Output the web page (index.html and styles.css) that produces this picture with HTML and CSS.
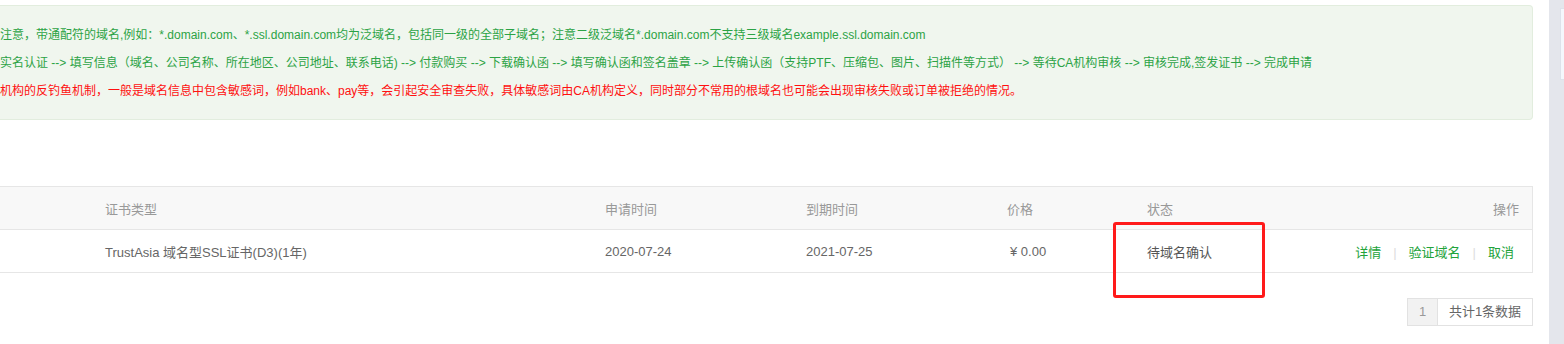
FILE: index.html
```html
<!DOCTYPE html>
<html lang="zh-CN">
<head>
  <meta charset="UTF-8" />
  <title>SSL证书</title>
  <link rel="stylesheet" href="styles.css">
</head>
<body>
  <div class="page">
    <div class="content">
      <!-- 提示信息 -->
      <div class="notice">
        <p class="tip">注意，带通配符的域名,例如：*.domain.com、*.ssl.domain.com均为泛域名，包括同一级的全部子域名；注意二级泛域名*.domain.com不支持三级域名example.ssl.domain.com</p>
        <p class="tip">实名认证 --&gt; 填写信息（域名、公司名称、所在地区、公司地址、联系电话) --&gt; 付款购买 --&gt; 下载确认函 --&gt; 填写确认函和签名盖章 --&gt; 上传确认函（支持PTF、压缩包、图片、扫描件等方式） --&gt; 等待CA机构审核 --&gt; 审核完成,签发证书 --&gt; 完成申请</p>
        <p class="tip warn">机构的反钓鱼机制，一般是域名信息中包含敏感词，例如bank、pay等，会引起安全审查失败，具体敏感词由CA机构定义，同时部分不常用的根域名也可能会出现审核失败或订单被拒绝的情况。</p>
      </div>

      <!-- 证书列表 -->
      <div class="list">
        <div class="row head">
          <div></div>
          <div>证书类型</div>
          <div>申请时间</div>
          <div>到期时间</div>
          <div>价格</div>
          <div>状态</div>
          <div class="ops">操作</div>
        </div>
        <div class="row">
          <div></div>
          <div>TrustAsia 域名型SSL证书(D3)(1年)</div>
          <div>2020-07-24</div>
          <div>2021-07-25</div>
          <div class="price">¥ 0.00</div>
          <div class="status">待域名确认</div>
          <div class="ops actions">
            <a href="#">详情</a><span class="sep">|</span><a href="#">验证域名</a><span class="sep">|</span><a href="#">取消</a>
          </div>
        </div>
      </div>

      <div class="pager">
        <span class="cur">1</span>
        <span class="total">共计1条数据</span>
      </div>

      <div class="mark"></div>
    </div>
    <div class="scrollbar"><div class="thumb"></div></div>
  </div>
</body>
</html>
```

FILE: styles.css
```css
body {
  margin: 0;
  overflow: hidden;
  font-family: "Liberation Sans", "Noto Sans CJK SC", sans-serif;
  background: #fff;
}
.page {
  display: flex;
  width: 1564px;
  height: 344px;
}
.content {
  position: relative;
  width: 1533px;
  margin-right: 16px;
  padding-top: 5px;
}
.notice {
  background-color: #f0f6ee;
  border: 1px solid #e2edde;
  border-left: none;
  border-radius: 0 4px 4px 0;
  padding: 15px 0 14px 0;
  font-size: 12px;
  line-height: 28px;
  color: #2ca345;
}
.tip {
  margin: 0;
  white-space: nowrap;
}
.tip.warn {
  color: #ff1010;
}
.list {
  margin-top: 66px;
  border-top: 1px solid #e6e6e6;
  border-right: 1px solid #e6e6e6;
  font-size: 13px;
}
.row {
  display: grid;
  grid-template-columns: 90px 500px 201px 201px 140px 200px 1fr;
  align-items: center;
  height: 42px;
  border-bottom: 1px solid #e6e6e6;
  color: #666;
}
.row > div {
  padding-left: 15px;
  white-space: nowrap;
}
.row.head {
  background-color: #f8f8f8;
  color: #999;
}
.row > .price {
  padding-left: 18px;
}
.row > .status {
  color: #555;
}
.row > .ops {
  text-align: right;
  padding-right: 13px;
}
.row > .actions {
  padding-right: 18px;
}
.actions a {
  color: #22a33a;
  text-decoration: none;
}
.sep {
  color: #ddd;
  margin: 0 12px;
}
.pager {
  display: flex;
  justify-content: flex-end;
  margin-top: 25px;
  font-size: 13px;
}
.pager span {
  height: 26px;
  line-height: 26px;
  border: 1px solid #e2e2e2;
  text-align: center;
}
.pager .cur {
  width: 29px;
  background-color: #f2f2f2;
  color: #999;
}
.pager .total {
  width: 94px;
  border-left: none;
  color: #666;
}
.mark {
  position: absolute;
  left: 1113px;
  top: 222px;
  width: 152px;
  height: 76px;
  box-sizing: border-box;
  border: 3px solid #ff1a1a;
  border-radius: 3px;
}
.scrollbar {
  width: 15px;
  background-color: #e4e6ec;
  position: relative;
}
.thumb {
  position: absolute;
  left: 11px;
  top: 8px;
  width: 4px;
  height: 72px;
  background-color: #f4f7fc;
  border: 1px solid #dde2ea;
  border-right: none;
  box-sizing: border-box;
}
```
